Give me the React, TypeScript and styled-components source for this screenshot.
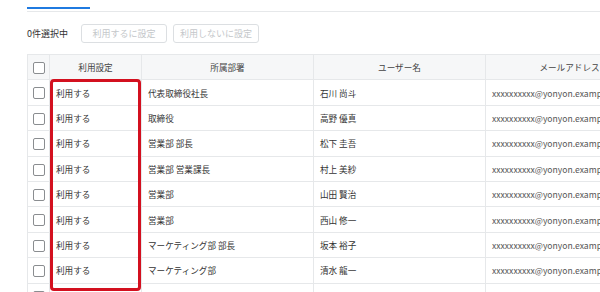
import styled, { createGlobalStyle } from 'styled-components';

const GlobalStyle = createGlobalStyle`
  html, body {
    margin: 0;
    padding: 0;
    background: #ffffff;
    overflow: hidden;
  }
  body {
    font-family: 'Noto Sans CJK JP', 'Noto Sans', sans-serif;
    color: #333333;
  }
`;

const Page = styled.div`
  width: 600px;
  height: 292px;
  overflow: hidden;
  padding-left: 27px;
  box-sizing: border-box;
`;

const TabBar = styled.div`
  height: 11px;
  border-bottom: 1px solid #e6e8ea;
  display: flex;
  align-items: flex-start;
`;

const ActiveTab = styled.div`
  width: 63px;
  height: 2px;
  margin-top: 7px;
  background: #1f7ae0;
`;

const Toolbar = styled.div`
  display: flex;
  align-items: center;
  height: 19px;
  margin-top: 12px;
`;

const Count = styled.span`
  font-size: 9px;
  color: #333333;
  margin-right: 13px;
`;

const Button = styled.button`
  width: 86px;
  height: 19px;
  margin-right: 6px;
  padding: 0;
  border: 1px solid #dcdfe2;
  border-radius: 3px;
  background: #ffffff;
  color: #c4c7ca;
  font-family: inherit;
  font-size: 9px;
`;

const TableWrap = styled.div`
  position: relative;
  margin-top: 11px;
`;

const Table = styled.table`
  border-collapse: collapse;
  table-layout: fixed;
  width: 626px;
  font-size: 8.6px;
`;

const HeadCell = styled.th`
  height: 24.4px;
  padding: 0;
  background: #f6f7f8;
  border: 1px solid #e6e8ea;
  font-weight: normal;
  color: #444444;
  text-align: center;
  white-space: nowrap;
  overflow: hidden;
`;

const Cell = styled.td<{ $muted?: boolean }>`
  height: 24.4px;
  padding: 0 0 0 6px;
  border: 1px solid #e6e8ea;
  color: ${(p) => (p.$muted ? '#555555' : '#333333')};
  white-space: nowrap;
  overflow: hidden;
`;

const CheckCell = styled.td`
  padding: 0;
  border: 1px solid #e6e8ea;
  text-align: center;
`;

const Box = styled.span`
  display: inline-block;
  width: 10px;
  height: 10px;
  border: 1px solid #8a8d90;
  border-radius: 2px;
  background: #ffffff;
  vertical-align: middle;
`;

const Highlight = styled.div`
  position: absolute;
  left: 23px;
  top: 25px;
  width: 91px;
  height: 212px;
  box-sizing: border-box;
  border: 3px solid #d3101f;
  border-radius: 4px;
  pointer-events: none;
`;

const rows = [
  { dept: '代表取締役社長', name: '石川 尚斗' },
  { dept: '取締役', name: '高野 優真' },
  { dept: '営業部 部長', name: '松下 圭吾' },
  { dept: '営業部 営業課長', name: '村上 美紗' },
  { dept: '営業部', name: '山田 賢治' },
  { dept: '営業部', name: '西山 修一' },
  { dept: 'マーケティング部 部長', name: '坂本 裕子' },
  { dept: 'マーケティング部', name: '清水 龍一' },
  { dept: '', name: '' },
];

const App = () => {
  return (
    <Page>
      <GlobalStyle />
      <TabBar>
        <ActiveTab />
      </TabBar>
      <Toolbar>
        <Count>0件選択中</Count>
        <Button disabled>利用するに設定</Button>
        <Button disabled>利用しないに設定</Button>
      </Toolbar>
      <TableWrap>
        <Table>
          <colgroup>
            <col style={{ width: 22 }} />
            <col style={{ width: 92 }} />
            <col style={{ width: 172 }} />
            <col style={{ width: 172 }} />
            <col style={{ width: 168 }} />
          </colgroup>
          <thead>
            <tr>
              <HeadCell>
                <Box />
              </HeadCell>
              <HeadCell>利用設定</HeadCell>
              <HeadCell>所属部署</HeadCell>
              <HeadCell>ユーザー名</HeadCell>
              <HeadCell>メールアドレス</HeadCell>
            </tr>
          </thead>
          <tbody>
            {rows.map((r, i) => (
              <tr key={i}>
                <CheckCell>
                  <Box />
                </CheckCell>
                <Cell>{r.dept ? '利用する' : ''}</Cell>
                <Cell>{r.dept}</Cell>
                <Cell>{r.name}</Cell>
                <Cell $muted>{r.dept ? 'xxxxxxxxxx@yonyon.example.com' : ''}</Cell>
              </tr>
            ))}
          </tbody>
        </Table>
        <Highlight />
      </TableWrap>
    </Page>
  );
};

export default App;
